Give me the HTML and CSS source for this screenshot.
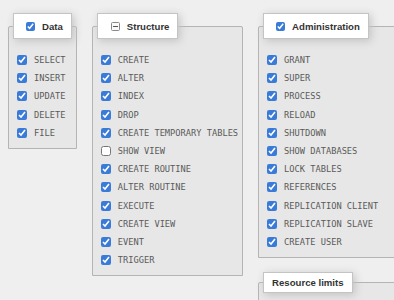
FILE: index.html
```html
<!DOCTYPE html>
<html lang="en">

<head>
    <meta charset="UTF-8">
    <meta name="viewport" content="width=device-width, initial-scale=1.0">
    <title>Privileges</title>
    <link rel="stylesheet" href="styles.css">
</head>

<body>

    <div class="privs">

        <fieldset class="privs__group">
            <legend class="privs__legend">
                <input type="checkbox" class="privs__check privs__check--legend" checked> Data
            </legend>
            <label class="privs__item"><input type="checkbox" class="privs__check" checked> SELECT</label>
            <label class="privs__item"><input type="checkbox" class="privs__check" checked> INSERT</label>
            <label class="privs__item"><input type="checkbox" class="privs__check" checked> UPDATE</label>
            <label class="privs__item"><input type="checkbox" class="privs__check" checked> DELETE</label>
            <label class="privs__item"><input type="checkbox" class="privs__check" checked> FILE</label>
        </fieldset>

        <fieldset class="privs__group">
            <legend class="privs__legend">
                <svg class="privs__partial" width="9" height="9" viewBox="0 0 9 9">
                    <rect x="0.5" y="0.5" width="8" height="8" rx="1" fill="#fafafa" stroke="#8a8a8a" />
                    <line x1="2" y1="4.5" x2="7" y2="4.5" stroke="#555" stroke-width="1" />
                </svg>
                Structure
            </legend>
            <label class="privs__item"><input type="checkbox" class="privs__check" checked> CREATE</label>
            <label class="privs__item"><input type="checkbox" class="privs__check" checked> ALTER</label>
            <label class="privs__item"><input type="checkbox" class="privs__check" checked> INDEX</label>
            <label class="privs__item"><input type="checkbox" class="privs__check" checked> DROP</label>
            <label class="privs__item"><input type="checkbox" class="privs__check" checked> CREATE TEMPORARY TABLES</label>
            <label class="privs__item"><input type="checkbox" class="privs__check"> SHOW VIEW</label>
            <label class="privs__item"><input type="checkbox" class="privs__check" checked> CREATE ROUTINE</label>
            <label class="privs__item"><input type="checkbox" class="privs__check" checked> ALTER ROUTINE</label>
            <label class="privs__item"><input type="checkbox" class="privs__check" checked> EXECUTE</label>
            <label class="privs__item"><input type="checkbox" class="privs__check" checked> CREATE VIEW</label>
            <label class="privs__item"><input type="checkbox" class="privs__check" checked> EVENT</label>
            <label class="privs__item"><input type="checkbox" class="privs__check" checked> TRIGGER</label>
        </fieldset>

        <div class="privs__column">
            <fieldset class="privs__group">
                <legend class="privs__legend">
                    <input type="checkbox" class="privs__check privs__check--legend" checked> Administration
                </legend>
                <label class="privs__item"><input type="checkbox" class="privs__check" checked> GRANT</label>
                <label class="privs__item"><input type="checkbox" class="privs__check" checked> SUPER</label>
                <label class="privs__item"><input type="checkbox" class="privs__check" checked> PROCESS</label>
                <label class="privs__item"><input type="checkbox" class="privs__check" checked> RELOAD</label>
                <label class="privs__item"><input type="checkbox" class="privs__check" checked> SHUTDOWN</label>
                <label class="privs__item"><input type="checkbox" class="privs__check" checked> SHOW DATABASES</label>
                <label class="privs__item"><input type="checkbox" class="privs__check" checked> LOCK TABLES</label>
                <label class="privs__item"><input type="checkbox" class="privs__check" checked> REFERENCES</label>
                <label class="privs__item"><input type="checkbox" class="privs__check" checked> REPLICATION CLIENT</label>
                <label class="privs__item"><input type="checkbox" class="privs__check" checked> REPLICATION SLAVE</label>
                <label class="privs__item"><input type="checkbox" class="privs__check" checked> CREATE USER</label>
            </fieldset>

            <fieldset class="privs__group privs__group--limits">
                <legend class="privs__legend privs__legend--plain">Resource limits</legend>
            </fieldset>
        </div>

    </div>

</body>

</html>
```

FILE: styles.css
```css
html,
body {
    overflow: hidden;
}

body {
    margin: 0;
    background-color: #efefef;
    font-family: "Liberation Sans", Arial, sans-serif;
}

.privs {
    display: flex;
    align-items: flex-start;
    gap: 15px;
    padding: 13px 0 0 8px;
}

.privs__column {
    display: flex;
    flex-direction: column;
    gap: 14px;
}

.privs__group {
    margin: 0;
    padding: 12px 4px 6px 4px;
    border: 1px solid #b4b4b4;
    border-radius: 2px 2px 0 0;
    background-color: #e7e7e7;
    display: flex;
    flex-direction: column;
}

.privs__group--limits {
    width: 200px;
    height: 10px;
}

.privs__legend {
    display: flex;
    align-items: center;
    height: 24px;
    padding: 0 8px;
    margin-left: 0;
    border: 1px solid #c4c4c4;
    background-color: #fff;
    box-shadow: 2px 2px 8px #c2c2c2;
    color: #333;
    font-size: 9.6px;
    font-weight: bold;
}

.privs__legend--plain {
    height: 19px;
}

.privs__check {
    width: 10px;
    height: 10px;
    margin: 0 7px 0 0;
    accent-color: #3b7bd8;
    flex-shrink: 0;
}

.privs__check--legend {
    width: 9px;
    height: 9px;
    margin-left: 4px;
}

.privs__partial {
    margin: 0 7px 0 5px;
    flex-shrink: 0;
}

.privs__item {
    display: flex;
    align-items: center;
    height: 18.2px;
    padding-left: 4px;
    font-family: "DejaVu Sans Mono", monospace;
    font-size: 8.7px;
    color: #5a5a5a;
    white-space: nowrap;
}
```
